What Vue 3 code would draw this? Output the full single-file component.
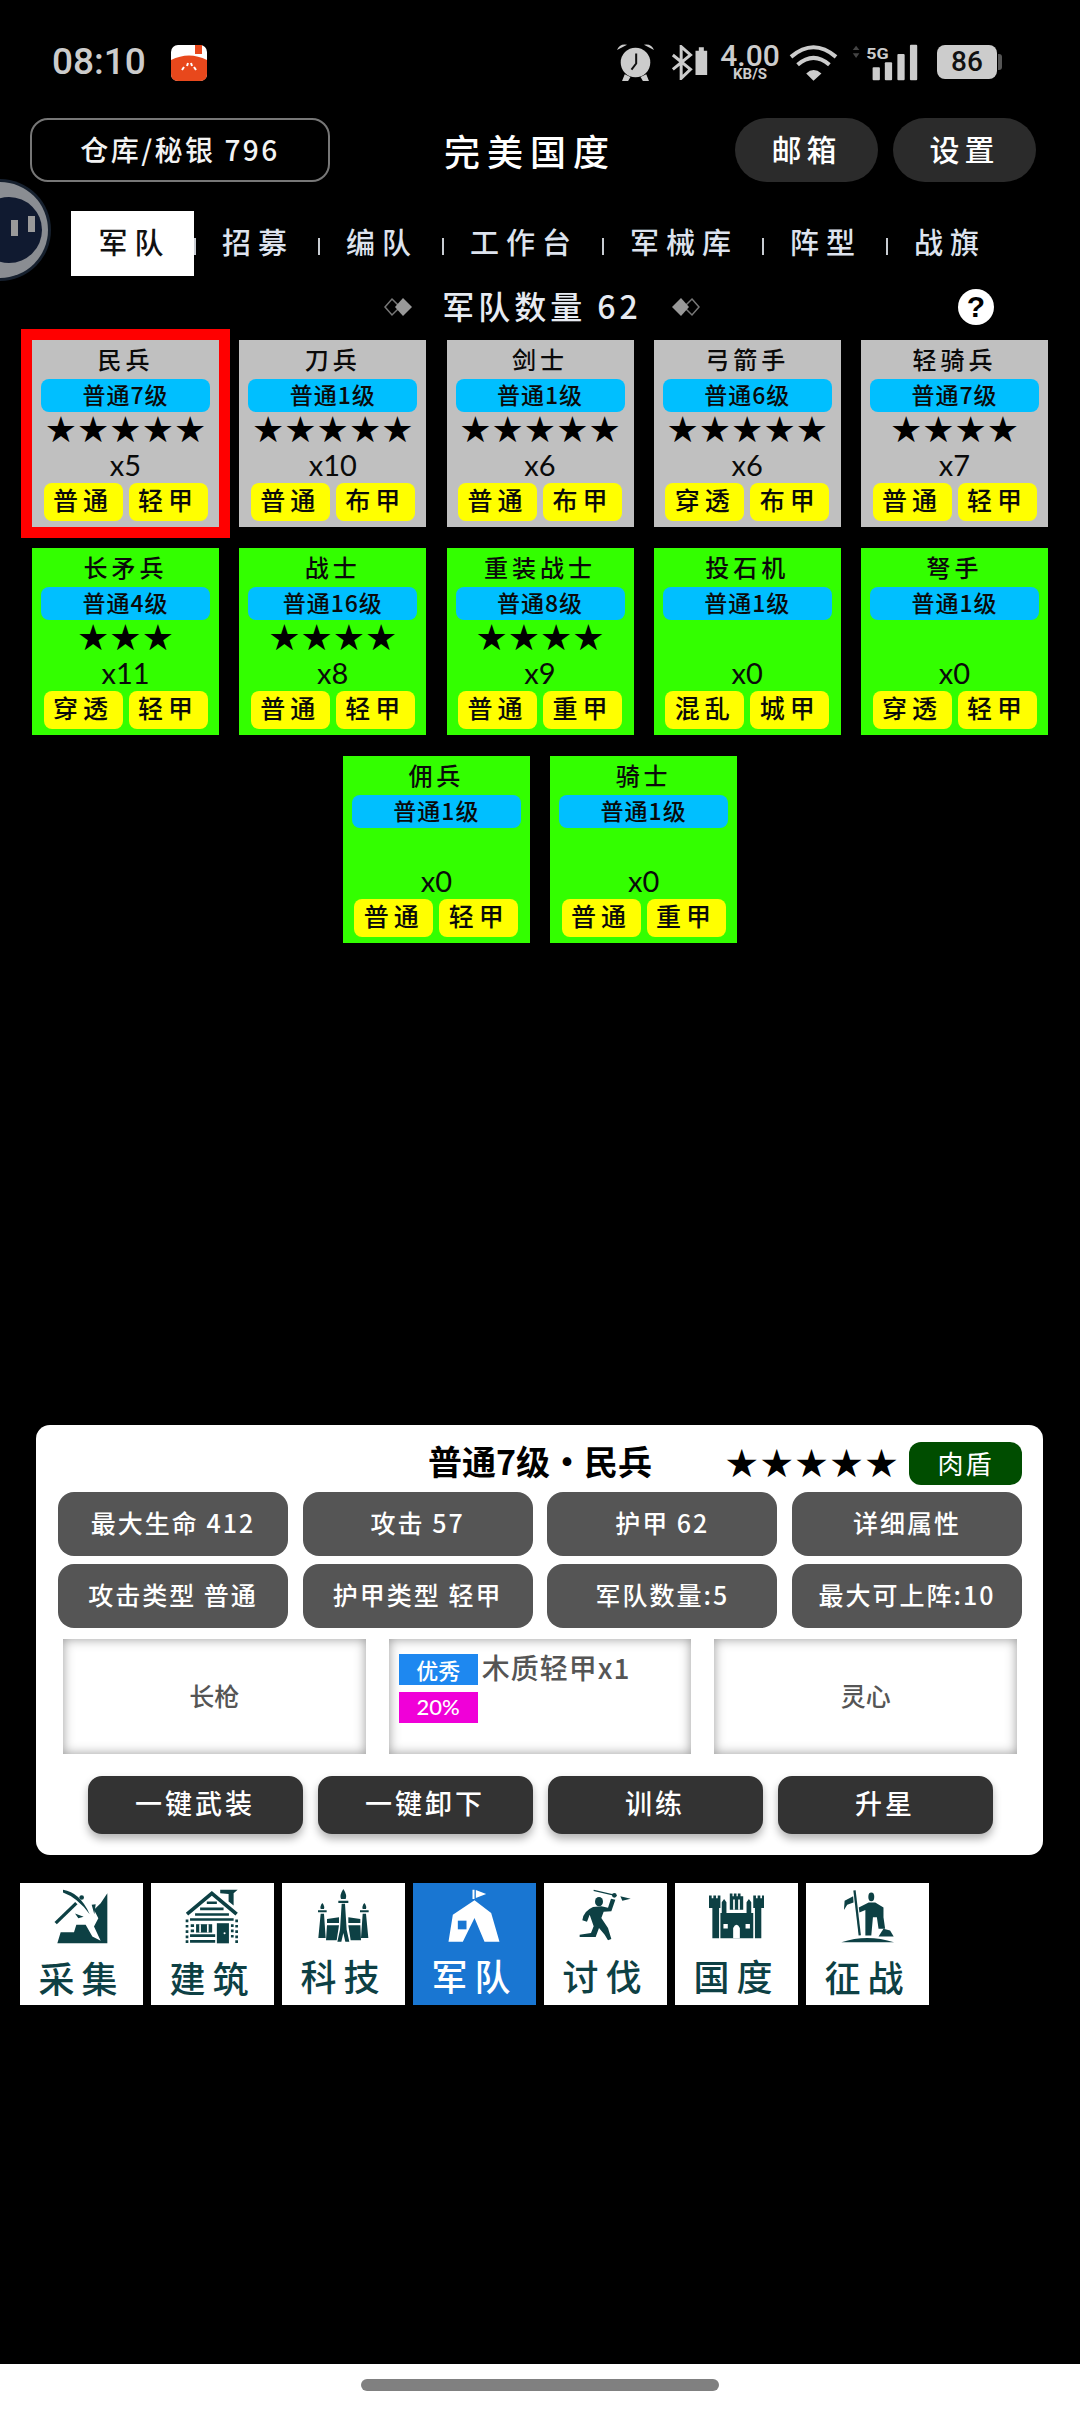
<script setup>
const cards = [
  { name: '民兵', level: '普通7级', stars: 5, count: 5, atk: '普通', def: '轻甲', unlocked: true, selected: true },
  { name: '刀兵', level: '普通1级', stars: 5, count: 10, atk: '普通', def: '布甲', unlocked: true },
  { name: '剑士', level: '普通1级', stars: 5, count: 6, atk: '普通', def: '布甲', unlocked: true },
  { name: '弓箭手', level: '普通6级', stars: 5, count: 6, atk: '穿透', def: '布甲', unlocked: true },
  { name: '轻骑兵', level: '普通7级', stars: 4, count: 7, atk: '普通', def: '轻甲', unlocked: true },
  { name: '长矛兵', level: '普通4级', stars: 3, count: 11, atk: '穿透', def: '轻甲' },
  { name: '战士', level: '普通16级', stars: 4, count: 8, atk: '普通', def: '轻甲' },
  { name: '重装战士', level: '普通8级', stars: 4, count: 9, atk: '普通', def: '重甲' },
  { name: '投石机', level: '普通1级', stars: 0, count: 0, atk: '混乱', def: '城甲' },
  { name: '弩手', level: '普通1级', stars: 0, count: 0, atk: '穿透', def: '轻甲' },
  { name: '佣兵', level: '普通1级', stars: 0, count: 0, atk: '普通', def: '轻甲' },
  { name: '骑士', level: '普通1级', stars: 0, count: 0, atk: '普通', def: '重甲' }
]

const tabs = ['军队', '招募', '编队', '工作台', '军械库', '阵型', '战旗']
const stats = ['最大生命 412', '攻击 57', '护甲 62', '详细属性', '攻击类型 普通', '护甲类型 轻甲', '军队数量:5', '最大可上阵:10']
const actions = ['一键武装', '一键卸下', '训练', '升星']
const nav = [
  { key: 'gather', label: '采集' },
  { key: 'build', label: '建筑' },
  { key: 'tech', label: '科技' },
  { key: 'army', label: '军队', active: true },
  { key: 'raid', label: '讨伐' },
  { key: 'nation', label: '国度' },
  { key: 'war', label: '征战' }
]
</script>

<template>
  <div class="page">
    <div class="float-ball">
      <div class="ball-inner"><i></i><i></i></div>
    </div>

    <div class="status">
      <span class="time">08:10</span>
      <svg class="app-icon" viewBox="0 0 36 36" width="36" height="36">
        <rect width="36" height="36" rx="7" fill="#fff" />
        <path d="M0 15 Q18 6 36 15 V29 Q36 36 29 36 H7 Q0 36 0 29 Z" fill="#e8481c" />
        <rect x="24" y="0" width="7" height="9" fill="#e8481c" />
        <path d="M11 25 l2 -3 M16 21 l1 -3 M21 21 l-1 -3 M25 25 l-2 -3" stroke="#fff" stroke-width="2" />
      </svg>
      <div class="status-right">
        <svg viewBox="45 40 110 110" width="37" height="37" fill="#ccc">
          <circle cx="100" cy="95" r="44" />
          <path d="M45 58 Q52 38 75 42 Z M155 58 Q148 38 125 42 Z M68 130 L60 150 H78 L85 138 Z M132 130 L140 150 H122 L115 138 Z" />
          <path d="M102 68 V98 L88 116" fill="none" stroke="#111" stroke-width="6" />
        </svg>
        <svg class="bt" viewBox="210 45 110 105" width="37" height="35">
          <path d="M215 75 L268 118 L240 145 V50 L268 75 L215 118" fill="none" stroke="#ccc" stroke-width="9" />
          <path d="M283 62 H293 V52 H308 V62 H318 V135 H283 Z" fill="#ccc" />
        </svg>
        <div class="speed"><b>4.00</b><span>KB/S</span></div>
        <svg class="wifi" viewBox="568 40 148 110" width="49" height="37" fill="none" stroke="#ccc" stroke-width="12">
          <path d="M574 78 Q642 20 710 78" />
          <path d="M594 102 Q642 60 690 102" />
          <path d="M618 146 L642 150 L666 128 Q642 108 620 128 L642 150 Z" fill="#ccc" stroke="none" />
        </svg>
        <svg class="signal" viewBox="760 40 205 112" width="68" height="37">
          <path d="M775 45 L785 58 H765 Z M775 82 L785 68 H765 Z" fill="#444" />
          <text x="806" y="84" font-family="Roboto, sans-serif" font-weight="700" font-size="44" fill="#ccc" textLength="68" lengthAdjust="spacingAndGlyphs">5G</text>
          <rect x="825" y="110" width="22" height="40" rx="3" fill="#ccc" />
          <rect x="862" y="95" width="22" height="55" rx="3" fill="#ccc" />
          <rect x="900" y="70" width="22" height="80" rx="3" fill="#ccc" />
          <rect x="938" y="42" width="22" height="108" rx="3" fill="#ccc" />
        </svg>
        <div class="battery"><span>86</span></div>
      </div>
    </div>

    <div class="top-bar">
      <div class="store">仓库/秘银 796</div>
      <div class="realm">完美国度</div>
      <div class="top-btn mail">邮箱</div>
      <div class="top-btn">设置</div>
    </div>

    <div class="tabs">
      <template v-for="(t, i) in tabs" :key="t">
        <div class="tab" :class="{ on: i === 0 }">{{ t }}</div>
        <span v-if="i < tabs.length - 1" class="sep"></span>
      </template>
    </div>

    <div class="count-row">
      <span></span>
      <div class="count">
        <svg viewBox="0 0 30 20" width="30" height="20">
          <path d="M8 2 L16 10 L8 18 L1 10 Z" fill="none" stroke="#777" stroke-width="1.5" />
          <path d="M19 1 L28 10 L19 19 L11 10 Z" fill="#999" />
        </svg>
        <span class="count-text">军队数量 62</span>
        <svg viewBox="0 0 30 20" width="30" height="20">
          <path d="M22 2 L29 10 L22 18 L14 10 Z" fill="none" stroke="#777" stroke-width="1.5" />
          <path d="M11 1 L19 10 L11 19 L2 10 Z" fill="#999" />
        </svg>
      </div>
      <div class="help">?</div>
    </div>

    <div class="grid">
      <div v-for="c in cards" :key="c.name" class="card" :class="{ grey: c.unlocked, picked: c.selected }">
        <div class="card-name">{{ c.name }}</div>
        <div class="card-level">{{ c.level }}</div>
        <div class="card-stars">{{ '★'.repeat(c.stars) }}</div>
        <div class="card-count">x{{ c.count }}</div>
        <div class="card-tags">
          <span>{{ c.atk }}</span>
          <span>{{ c.def }}</span>
        </div>
      </div>
    </div>

    <div class="panel">
      <div class="panel-head">
        <span></span>
        <div class="panel-title">普通7级·民兵</div>
        <div class="panel-right">
          <span class="panel-stars">★★★★★</span>
          <span class="role">肉盾</span>
        </div>
      </div>
      <div class="stats">
        <div v-for="s in stats" :key="s" class="stat">{{ s }}</div>
      </div>
      <div class="slots">
        <div class="slot center-slot">长枪</div>
        <div class="slot gear">
          <div class="gear-row">
            <span class="q blue">优秀</span>
            <span class="gear-name">木质轻甲x1</span>
          </div>
          <div class="gear-row"><span class="q pink">20%</span></div>
        </div>
        <div class="slot center-slot">灵心</div>
      </div>
      <div class="actions">
        <div v-for="a in actions" :key="a" class="action">{{ a }}</div>
      </div>
    </div>

    <div class="nav">
      <div v-for="n in nav" :key="n.key" class="nav-item" :class="{ active: n.active }">
        <svg v-if="n.key === 'gather'" viewBox="45 10 165 170" width="55" height="57" class="ico">
          <path d="M205 25 V175 H55 L65 142 H105 L112 120 H140 L160 155 L185 168 L165 125 L178 100 L165 75 L185 55 Z" />
          <path d="M72 15 Q122 22 152 88 Q115 38 72 23 Z" />
          <path d="M50 115 L112 55" fill="none" stroke="#0d4044" stroke-width="10" />
          <circle cx="128" cy="38" r="7" />
          <path d="M108 86 L134 96 L118 100 Z M158 60 L170 58 L166 88 Z" />
        </svg>
        <svg v-else-if="n.key === 'build'" viewBox="432 10 170 170" width="57" height="57" class="ico">
          <path d="M441 88 L515 26 L589 88" fill="none" stroke="#0d4044" stroke-width="11" />
          <path d="M540 15 H592 L580 26 V62 L565 50 V28 L540 26 Z" />
          <path d="M500 50 H530 V58 H500 Z M480 68 H550 V76 H480 Z M465 85 H566 V93 H465 Z" />
          <path d="M450 100 H580 V108 H450 Z M450 148 H525 V156 H450 Z M450 165 H525 V173 H450 Z" />
          <path d="M468 118 H516 V143 H468 Z" />
          <path d="M480 118 V143 M503 118 V143" stroke="#fff" stroke-width="5" />
          <path d="M530 115 H566 V175 H530 Z" />
          <circle cx="553" cy="145" r="3" fill="#fff" />
          <path d="M437 104 h8 v8 h-8 Z M437 120 h8 v8 h-8 Z M437 136 h8 v8 h-8 Z M437 152 h8 v8 h-8 Z M437 166 h8 v8 h-8 Z M585 104 h8 v8 h-8 Z M585 120 h8 v8 h-8 Z M585 136 h8 v8 h-8 Z M585 152 h8 v8 h-8 Z M585 166 h8 v8 h-8 Z" />
          <path d="M452 118 h10 v8 h-10 Z M452 134 h10 v8 h-10 Z M572 118 h8 v8 h-8 Z M572 134 h8 v8 h-8 Z M572 150 h8 v8 h-8 Z" />
        </svg>
        <svg v-else-if="n.key === 'tech'" viewBox="48 15 165 165" width="55" height="55" class="ico">
          <path d="M130 18 Q142 36 137 48 H123 Q118 36 130 18 Z" />
          <path d="M115 53 H145 V60 H115 Z M54 82 H80 V88 H54 Z M180 82 H206 V88 H180 Z" />
          <path d="M125 62 H135 L140 140 L148 176 H136 L130 150 L124 176 H112 L120 140 Z" />
          <path d="M67 60 Q75 70 72 78 H62 Q59 70 67 60 Z M193 60 Q201 70 198 78 H188 Q185 70 193 60 Z" />
          <path d="M62 92 H72 L77 165 H55 Z M188 92 H198 L205 165 H183 Z" />
          <path d="M81 108 L117 103 V120 H81 Z M81 127 H117 L110 172 H78 Z M145 103 L181 108 V120 H145 Z M145 127 H181 L183 172 H152 Z" />
        </svg>
        <svg v-else-if="n.key === 'army'" viewBox="440 15 170 165" width="57" height="55" class="ico">
          <path d="M519 20 H525 V48 H519 Z M529 21 L560 33 L529 45 Z" />
          <path d="M525 52 L575 90 L600 176 H555 L525 105 L490 176 H447 L460 95 Z" />
          <rect x="475" y="113" width="26" height="26" fill="#1976d2" />
        </svg>
        <svg v-else-if="n.key === 'raid'" viewBox="25 15 165 165" width="55" height="55" class="ico">
          <path d="M72 22 L140 38" fill="none" stroke="#0d4044" stroke-width="4" />
          <path d="M152 40 L183 47 L158 53 Z" />
          <circle cx="134" cy="37" r="7" />
          <ellipse cx="88" cy="56" rx="12" ry="14" />
          <path d="M70 72 Q40 85 38 112 L52 116 L60 95 L72 130 L64 150 L30 155 V162 L78 162 L88 135 L105 155 L115 172 L125 168 L115 135 L95 105 L102 86 L125 85 L137 50 L124 47 L115 74 L95 70 Z" />
        </svg>
        <svg v-else-if="n.key === 'nation'" viewBox="412 35 176 145" width="59" height="55" class="ico">
          <path d="M418 48 h8 v8 h5 v-8 h8 v8 h5 v-8 h8 V85 H448 V175 H428 V85 H418 Z" />
          <path d="M550 48 h8 v8 h5 v-8 h8 v8 h5 v-8 h6 V85 H574 V175 H555 V85 H550 Z" />
          <path d="M480 42 h8 v8 h4 v-8 h8 v8 h4 v-8 h8 v8 h8 V90 H480 Z" fill-rule="evenodd" />
          <path d="M456 68 L463 58 L470 68 V100 H530 V68 L537 58 L544 68 V100 H550 V175 H452 V100 H456 Z" />
          <path d="M490 60 H495 V90 H490 Z M505 60 H510 V90 H505 Z" fill="#fff" />
          <path d="M461 133 h13 v13 h-13 Z M527 133 h13 v13 h-13 Z M490 175 V145 Q500 125 510 145 V175 Z" fill="#fff" />
        </svg>
        <svg v-else viewBox="808 12 170 168" width="56" height="56" class="ico">
          <path d="M852 18 L868 155" fill="none" stroke="#0d4044" stroke-width="7" />
          <path d="M848 36 L822 50 L820 78 L830 62 L849 55 Z" />
          <ellipse cx="903" cy="38" rx="9" ry="13" />
          <path d="M865 70 L895 55 H915 L940 70 V100 L945 135 H925 L920 100 H908 L903 155 H885 L885 78 L867 85 Z" />
          <path d="M925 158 L940 135 L960 140 L971 158 Z" />
          <path d="M812 176 Q890 150 972 176 Z" />
        </svg>
        <span class="nav-label">{{ n.label }}</span>
      </div>
    </div>

    <div class="home-area"><div class="home-bar"></div></div>
  </div>
</template>

<style>
html, body { margin: 0; background: #000; }
</style>

<style scoped>
.page {
  position: relative;
  width: 1080px;
  height: 2412px;
  overflow: hidden;
  display: flex;
  flex-direction: column;
  background: #000;
  font-family: "Noto Sans CJK SC", "Lato", sans-serif;
  color: #fff;
}

.float-ball {
  position: absolute;
  left: -48px;
  top: 182px;
  width: 96px;
  height: 96px;
  box-sizing: border-box;
  border-radius: 50%;
  background: #8a8d92;
  box-shadow: 0 0 0 3px #16202e;
}
.ball-inner {
  position: absolute;
  left: 24px;
  top: 15px;
  width: 66px;
  height: 66px;
  border-radius: 50%;
  background: #101a30;
}
.ball-inner i {
  position: absolute;
  left: 35px;
  top: 23px;
  width: 7px;
  height: 16px;
  background: #9a9a9a;
}
.ball-inner i + i {
  left: 52px;
  top: 19px;
}

.status {
  height: 118px;
  display: flex;
  align-items: flex-start;
  padding: 43px 0 0 52px;
  box-sizing: border-box;
}
.time {
  font-family: "Roboto", sans-serif;
  font-weight: 500;
  font-size: 37px;
  line-height: 38px;
  color: #ccc;
  width: 119px;
}
.app-icon {
  margin-top: 2px;
}
.status-right {
  margin-left: auto;
  margin-right: 83px;
  display: flex;
  align-items: center;
  height: 38px;
}
.bt { margin-left: 17px; }
.speed {
  margin-left: 11px;
  width: 62px;
  display: flex;
  flex-direction: column;
  align-items: center;
  font-family: "Roboto", sans-serif;
  color: #ccc;
}
.speed b {
  font-size: 30px;
  line-height: 25px;
  font-weight: 500;
}
.speed span {
  font-size: 15px;
  line-height: 13px;
  font-weight: 700;
}
.wifi { margin-left: 8px; }
.signal { margin-left: 13px; }
.battery {
  margin-left: 18px;
  width: 60px;
  height: 34px;
  border-radius: 8px;
  background: #ccc;
  color: #111;
  font-family: "Roboto", sans-serif;
  font-weight: 500;
  font-size: 28px;
  line-height: 34px;
  text-align: center;
  position: relative;
}
.battery::after {
  content: "";
  position: absolute;
  right: -5px;
  top: 9px;
  width: 4px;
  height: 16px;
  border-radius: 0 3px 3px 0;
  background: #555;
}

.top-bar {
  height: 64px;
  display: flex;
  align-items: center;
  padding: 0 44px 0 30px;
}
.store {
  width: 300px;
  height: 64px;
  box-sizing: border-box;
  border: 2px solid #777;
  border-radius: 18px;
  text-align: center;
  font-size: 28px;
  font-weight: 500;
  line-height: 58px;
  letter-spacing: 2.5px;
  color: #f3f3f3;
  white-space: nowrap;
}
.realm {
  margin-left: 114px;
  font-size: 36px;
  font-weight: 500;
  letter-spacing: 7px;
  white-space: nowrap;
}
.top-btn {
  width: 143px;
  height: 64px;
  border-radius: 32px;
  background: #2b2b2b;
  text-align: center;
  font-size: 30px;
  font-weight: 500;
  line-height: 60px;
  letter-spacing: 5px;
  margin-left: 15px;
}
.mail { margin-left: auto; }

.tabs {
  margin-top: 29px;
  height: 65px;
  display: flex;
  align-items: center;
  padding-left: 71px;
}
.tab {
  font-size: 29px;
  font-weight: 500;
  letter-spacing: 7px;
  color: #dde3ee;
  white-space: nowrap;
  padding: 0 24px 6px 26px;
}
.tab.on {
  width: 123px;
  height: 65px;
  box-sizing: border-box;
  padding: 0 0 0 4px;
  background: #fff;
  color: #111;
  text-align: center;
  line-height: 60px;
}
.sep {
  width: 2px;
  height: 17px;
  margin-top: 6px;
  background: #c8ccd2;
  flex: none;
}

.count-row {
  margin-top: 11px;
  height: 40px;
  display: grid;
  grid-template-columns: 1fr auto 1fr;
  align-items: center;
}
.count {
  display: flex;
  align-items: center;
  gap: 32px;
  padding-left: 4px;
}
.count-text {
  font-size: 32px;
  font-weight: 500;
  line-height: 36px;
  letter-spacing: 4px;
  color: #e7ebf2;
  white-space: nowrap;
  margin: -4px -4px 0;
}
.help {
  justify-self: end;
  margin-right: 86px;
  width: 36px;
  height: 36px;
  border-radius: 50%;
  background: #fff;
  color: #000;
  font-family: "Liberation Sans", sans-serif;
  font-weight: 700;
  font-size: 30px;
  line-height: 36px;
  text-align: center;
}

.grid {
  margin-top: 13px;
  padding: 0 22px;
  display: flex;
  flex-wrap: wrap;
  justify-content: center;
  gap: 21px 20.25px;
}
.card {
  width: 187px;
  height: 187px;
  background: #33ff00;
  color: #0a0a0a;
  display: flex;
  flex-direction: column;
  align-items: center;
}
.card.grey { background: #c0c0c0; }
.card.picked { outline: 11px solid #ff0000; }
.card-name {
  height: 39px;
  font-size: 24px;
  font-weight: 500;
  line-height: 37px;
  letter-spacing: 4px;
  white-space: nowrap;
}
.card-level {
  width: 169px;
  height: 33px;
  background: #00bfff;
  border-radius: 8px;
  font-size: 23px;
  font-weight: 500;
  line-height: 30px;
  text-align: center;
  letter-spacing: 1px;
}
.card-stars {
  height: 36px;
  font-family: "DejaVu Sans", sans-serif;
  font-size: 36px;
  line-height: 36px;
  color: #000;
  white-space: nowrap;
}
.card-count {
  height: 35px;
  font-family: "Lato", sans-serif;
  font-size: 29px;
  line-height: 33px;
}
.card-tags {
  display: flex;
  gap: 6px;
}
.card-tags span {
  width: 79px;
  height: 38px;
  background: #ffff00;
  border-radius: 8px;
  font-size: 25px;
  font-weight: 500;
  line-height: 33px;
  letter-spacing: 5px;
  text-align: center;
}

.panel {
  position: absolute;
  left: 36px;
  top: 1425px;
  width: 1007px;
  box-sizing: border-box;
  background: #fff;
  border-radius: 14px;
  padding: 17px 21px 21px 22px;
}
.panel-head {
  height: 43px;
  display: grid;
  grid-template-columns: 1fr auto 1fr;
  align-items: center;
  color: #000;
}
.panel-title {
  font-size: 34px;
  font-weight: 700;
  line-height: 38px;
  margin-top: -6px;
  white-space: nowrap;
}
.panel-right {
  display: flex;
  align-items: center;
  justify-content: flex-end;
  gap: 10px;
}
.panel-stars {
  font-family: "DejaVu Sans", sans-serif;
  font-size: 39px;
  line-height: 43px;
  white-space: nowrap;
}
.role {
  width: 113px;
  height: 43px;
  background: #004d00;
  border-radius: 12px;
  color: #fff;
  font-size: 26px;
  line-height: 41px;
  text-align: center;
  letter-spacing: 2px;
}
.stats {
  margin-top: 7px;
  display: grid;
  grid-template-columns: repeat(4, 1fr);
  gap: 8px 14.5px;
}
.stat {
  height: 64px;
  background: #555;
  border-radius: 16px;
  text-align: center;
  font-size: 25px;
  font-weight: 500;
  line-height: 60px;
  letter-spacing: 2px;
  white-space: nowrap;
}
.slots {
  margin-top: 11px;
  padding: 0 5px;
  display: grid;
  grid-template-columns: repeat(3, 1fr);
  gap: 23px;
}
.slot {
  min-width: 0;
  height: 115px;
  box-shadow: inset 0 0 12px #999;
  color: #555;
  font-size: 25px;
  font-weight: 500;
}
.center-slot {
  text-align: center;
  line-height: 112px;
}
.gear {
  box-sizing: border-box;
  padding: 15px 0 0 10px;
  display: flex;
  flex-direction: column;
  gap: 7px;
}
.gear-row {
  display: flex;
  gap: 4px;
  height: 31px;
}
.q {
  width: 79px;
  height: 31px;
  color: #fff;
  text-align: center;
  font-size: 22px;
  line-height: 30px;
}
.q.blue { background: #1e88f0; }
.q.pink { background: #f000d8; font-family: "Lato", sans-serif; }
.gear-name {
  font-size: 28px;
  line-height: 27px;
  letter-spacing: 1px;
  white-space: nowrap;
}
.actions {
  margin-top: 22px;
  display: flex;
  justify-content: center;
  gap: 15px;
}
.action {
  width: 215px;
  height: 58px;
  background: #333;
  border-radius: 14px;
  box-shadow: 0 5px 8px rgba(0, 0, 0, 0.3);
  text-align: center;
  font-size: 27px;
  font-weight: 500;
  line-height: 54px;
  letter-spacing: 3px;
}

.nav {
  position: absolute;
  left: 20px;
  top: 1883px;
  display: flex;
  gap: 8px;
}
.nav-item {
  width: 123px;
  height: 122px;
  background: #fff;
  color: #0d4044;
  display: flex;
  flex-direction: column;
  align-items: center;
  fill: #0d4044;
  padding-top: 5px;
  box-sizing: border-box;
}
.nav-item.active {
  background: #1976d2;
  color: #fff;
  fill: #fff;
}
.ico { flex: none; }
.nav-label {
  font-size: 36px;
  font-weight: 500;
  line-height: 56px;
  letter-spacing: 7px;
  white-space: nowrap;
  margin-top: 4px;
}

.home-area {
  margin-top: auto;
  height: 48px;
  background: #fff;
  display: flex;
  justify-content: center;
  padding-top: 15px;
  box-sizing: border-box;
}
.home-bar {
  width: 358px;
  height: 12px;
  border-radius: 6px;
  background: #808080;
}
</style>
